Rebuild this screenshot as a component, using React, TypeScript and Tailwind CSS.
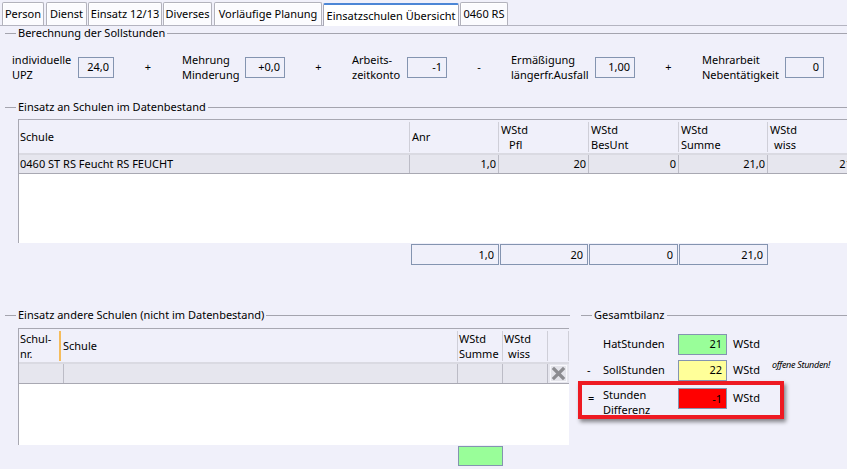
import React from "react";

function Group({ title, dashMl = "ml-[5px]" }: { title: string; dashMl?: string }) {
  return (
    <div className="flex items-center h-[14px]">
      <div className={"w-[11px] h-px bg-[#a4a4ae] " + dashMl} />
      <span className="px-[2px] whitespace-nowrap">{title}</span>
      <div className="flex-1 h-px bg-[#a4a4ae]" />
    </div>
  );
}

function Box({ v, w, bg = "" }: { v: string; w: string; bg?: string }) {
  return (
    <div
      className={
        "h-[21px] border border-[#8494b0] flex items-center justify-end pr-[4px] " + w + " " + bg
      }
    >
      {v}
    </div>
  );
}

function Tab({ label, cls, active = false }: { label: string; cls: string; active?: boolean }) {
  return (
    <div
      className={
        "h-[23px] flex items-center justify-center whitespace-nowrap rounded-t-[2px] border border-b-0 " +
        (active
          ? "bg-white border-[#a9a9b6] border-t-2 border-t-[#4c86d6] relative top-px"
          : "bg-[#fbfbfe] border-[#b2b2bc] shadow-[inset_1px_1px_0_#ffffff]") +
        " " +
        cls
      }
    >
      {label}
    </div>
  );
}

export default function App() {
  return (
    <div className="w-[847px] h-[469px] overflow-hidden bg-[#f0f0fa] text-[11px] leading-[14px] text-black font-['Noto_Sans',sans-serif]">
      {/* Tabs */}
      <div className="h-[26px] flex items-end border-b border-[#b4b4c0]">
        <Tab label="Person" cls="ml-[2px] w-[42px]" />
        <Tab label="Dienst" cls="ml-[2px] w-[41px]" />
        <Tab label="Einsatz 12/13" cls="ml-[1px] w-[74px]" />
        <Tab label="Diverses" cls="ml-[1px] w-[49px]" />
        <Tab label="Vorläufige Planung" cls="ml-[2px] w-[108px]" />
        <Tab label="Einsatzschulen Übersicht" cls="ml-[1px] w-[136px]" active />
        <Tab label="0460 RS" cls="ml-[1px] w-[48px]" />
      </div>

      {/* Section 1 */}
      <div className="mt-0">
        <Group title="Berechnung der Sollstunden" />
      </div>
      <div className="mt-[12px] h-[30px] flex items-center pl-[12px]">
        <div className="w-[66px] leading-[15px]">individuelle<br />UPZ</div>
        <Box v="24,0" w="w-[36px]" />
        <div className="w-[68px] text-center">+</div>
        <div className="w-[63px] leading-[15px]">Mehrung<br />Minderung</div>
        <Box v="+0,0" w="w-[40px]" />
        <div className="w-[67px] text-center">+</div>
        <div className="w-[55px] leading-[15px]">Arbeits-<br />zeitkonto</div>
        <Box v="-1" w="w-[40px]" />
        <div className="w-[64px] text-center">-</div>
        <div className="w-[84px] leading-[15px] whitespace-nowrap">Ermäßigung<br />längerfr.Ausfall</div>
        <Box v="1,00" w="w-[40px]" />
        <div className="w-[67px] text-center">+</div>
        <div className="w-[83px] leading-[15px] whitespace-nowrap">Mehrarbeit<br />Nebentätigkeit</div>
        <Box v="0" w="w-[39px]" />
      </div>

      {/* Section 2 */}
      <div className="mt-[18px]">
        <Group title="Einsatz an Schulen im Datenbestand" />
      </div>
      <div className="mt-[5px] ml-[18px] border-l border-t border-[#a8a8b2] overflow-hidden">
        <div className="grid grid-cols-[390px_89px_90px_90px_89px_96px] h-[33px]">
          <div className="flex items-center pl-[1px]">Schule</div>
          <div className="flex items-center pl-[2px] my-[2px] border-l border-[#cfcfd8]">Anr</div>
          <div className="flex flex-col justify-center pl-[2px] my-[2px] border-l border-[#cfcfd8] leading-[15px]">
            <span>WStd</span>
            <span className="pl-[8px]">Pfl</span>
          </div>
          <div className="flex flex-col justify-center pl-[2px] my-[2px] border-l border-[#cfcfd8] leading-[15px]">
            <span>WStd</span>
            <span>BesUnt</span>
          </div>
          <div className="flex flex-col justify-center pl-[2px] my-[2px] border-l border-[#cfcfd8] leading-[15px]">
            <span>WStd</span>
            <span>Summe</span>
          </div>
          <div className="flex flex-col justify-center pl-[2px] my-[2px] border-l border-[#cfcfd8] leading-[15px]">
            <span>WStd</span>
            <span className="pl-[4px]">wiss</span>
          </div>
        </div>
        <div className="h-[2px] bg-[#dadae2]" />
        <div className="grid grid-cols-[390px_89px_90px_90px_89px_96px] h-[19px] bg-[#e6e6ee] border-b border-[#a8a8b2]">
          <div className="flex items-center pl-[1px] whitespace-nowrap">0460 ST RS Feucht RS FEUCHT</div>
          <div className="flex items-center justify-end pr-[2px] border-l border-[#bcbcc6]">1,0</div>
          <div className="flex items-center justify-end pr-[2px] border-l border-[#bcbcc6]">20</div>
          <div className="flex items-center justify-end pr-[2px] border-l border-[#bcbcc6]">0</div>
          <div className="flex items-center justify-end pr-[2px] border-l border-[#bcbcc6]">21,0</div>
          <div className="flex items-center justify-end pr-[2px] border-l border-[#bcbcc6]">21,0</div>
        </div>
        <div className="h-[69px] bg-white" />
      </div>
      <div className="mt-[1px] ml-[411px] flex gap-[1px]">
        <Box v="1,0" w="w-[88px] h-[20px]" />
        <Box v="20" w="w-[88px] h-[20px]" />
        <Box v="0" w="w-[89px] h-[20px]" />
        <Box v="21,0" w="w-[89px] h-[20px]" />
      </div>

      {/* Bottom */}
      <div className="mt-[43px] flex">
        <div className="w-[570px] shrink-0">
          <Group title="Einsatz andere Schulen (nicht im Datenbestand)" />
          <div className="mt-[6px] ml-[18px] w-[551px] border-l border-t border-[#a8a8b2]">
            <div className="grid grid-cols-[42px_396px_45px_45px_22px] h-[33px]">
              <div className="flex items-center pl-[1px] leading-[15px] border-r-2 border-[#f5bc5c] my-[2px]">
                Schul-<br />nr.
              </div>
              <div className="flex items-center pl-[2px]">Schule</div>
              <div className="flex flex-col justify-center pl-[1px] my-[2px] border-l border-[#cfcfd8] leading-[15px]">
                <span>WStd</span>
                <span>Summe</span>
              </div>
              <div className="flex flex-col justify-center pl-[1px] my-[2px] border-l border-[#cfcfd8] leading-[15px]">
                <span>WStd</span>
                <span className="pl-[4px]">wiss</span>
              </div>
              <div className="my-[2px] border-l border-[#cfcfd8] border-r" />
            </div>
            <div className="h-[2px] bg-[#dadae2]" />
            <div className="grid grid-cols-[44px_394px_45px_45px_22px] h-[20px] bg-[#e6e6ee] border-b border-[#a8a8b2]">
              <div />
              <div className="border-l border-[#bcbcc6]" />
              <div className="border-l border-[#bcbcc6]" />
              <div className="border-l border-[#bcbcc6]" />
              <div className="border-l border-[#bcbcc6] flex items-center pl-[2px]">
                <svg width="17" height="17" viewBox="0 0 17 17">
                  <rect x="0.5" y="0.5" width="16" height="16" fill="#e4e4ea" stroke="#f8f8fc" />
                  <path d="M4 4 L13 13 M13 4 L4 13" stroke="#8c8c90" strokeWidth="3.2" strokeLinecap="square" />
                </svg>
              </div>
            </div>
            <div className="h-[61px] bg-white" />
          </div>
          <div className="mt-[1px] ml-[458px] w-[45px] h-[20px] bg-[#99fe99] border border-[#8494b0]" />
        </div>

        <div className="flex-1">
          <Group title="Gesamtbilanz" dashMl="ml-[11px]" />
          <div className="mt-[12px] flex items-center h-[20px] pl-[17px]">
            <div className="w-[16px]" />
            <div className="w-[75px]">HatStunden</div>
            <Box v="21" w="w-[49px] h-[20px] bg-[#99fe99]" />
            <div className="ml-[6px]">WStd</div>
          </div>
          <div className="mt-[6px] flex items-center h-[20px] pl-[17px]">
            <div className="w-[16px]">-</div>
            <div className="w-[75px]">SollStunden</div>
            <Box v="22" w="w-[49px] h-[20px] bg-[#ffff99]" />
            <div className="ml-[6px]">WStd</div>
            <div className="ml-[12px] self-start text-[9px] leading-[10px] italic tracking-[-0.3px] whitespace-nowrap">
              offene Stunden!
            </div>
          </div>
          <div className="mt-[1px] ml-[8px] w-[206px] h-[38px] border-4 border-[#ee1a22] shadow-[2px_3px_4px_rgba(0,0,0,0.45)] flex items-start pl-[2px]">
            <div className="w-[19px] pl-[4px] mt-[6px]">=</div>
            <div className="w-[75px] mt-[2px] leading-[15px]">
              Stunden<br />Differenz
            </div>
            <div className="mt-[3px]">
              <Box v="-1" w="w-[49px] h-[20px] bg-[#ff0000]" />
            </div>
            <div className="ml-[6px] mt-[6px]">WStd</div>
          </div>
        </div>
      </div>
    </div>
  );
}
